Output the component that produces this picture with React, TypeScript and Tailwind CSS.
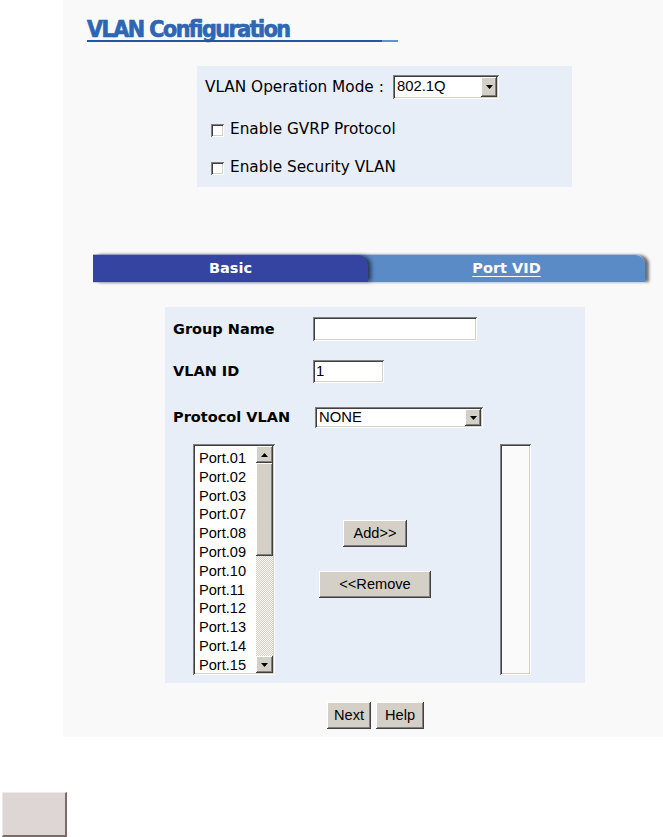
import React from "react";

const SUNKEN =
  "shadow-[inset_1px_1px_0_#808080,inset_-1px_-1px_0_#ffffff,inset_2px_2px_0_#404040,inset_-2px_-2px_0_#d4d0c8]";
const RAISED =
  "shadow-[inset_-1px_-1px_0_#404040,inset_1px_1px_0_#ffffff,inset_-2px_-2px_0_#808080,inset_2px_2px_0_#d4d0c8]";

function TriDown() {
  return (
    <svg width="7" height="4" viewBox="0 0 7 4">
      <path d="M0 0h7L3.5 4z" fill="#000" />
    </svg>
  );
}
function TriUp() {
  return (
    <svg width="7" height="4" viewBox="0 0 7 4">
      <path d="M0 4h7L3.5 0z" fill="#000" />
    </svg>
  );
}

function DropBtn() {
  return (
    <div className={`w-[16px] h-full bg-[#d4d0c8] ${RAISED} flex items-center justify-center`}>
      <TriDown />
    </div>
  );
}

function Checkbox() {
  return <div className={`w-[13px] h-[13px] bg-white ${SUNKEN}`} />;
}

function WinButton({ label, className }: { label: string; className: string }) {
  return (
    <div
      className={`bg-[#d4d0c8] ${RAISED} flex items-center justify-center font-['Liberation_Sans',Arial,sans-serif] text-[14.6px] text-black ${className}`}
    >
      {label}
    </div>
  );
}

const ports = [
  "Port.01",
  "Port.02",
  "Port.03",
  "Port.07",
  "Port.08",
  "Port.09",
  "Port.10",
  "Port.11",
  "Port.12",
  "Port.13",
  "Port.14",
  "Port.15",
];

export default function App() {
  return (
    <div className="w-[663px] h-[837px] bg-white flex flex-col overflow-hidden font-['DejaVu_Sans',Verdana,sans-serif] text-black">
      <div className="flex">
        <div className="w-[63px] shrink-0" />
        <div className="w-[600px] h-[737px] bg-[#f9f9f9] flex flex-col">
          {/* Title */}
          <div className="ml-[24px] mt-[16px] w-[311px] flex flex-col">
            <div className="h-[24px] flex items-end">
              <span className="font-['DejaVu_Sans',sans-serif] font-bold font-stretch-condensed text-[23px] leading-[21px] tracking-[-1.5px] text-[#2d67b4] [-webkit-text-stroke:0.7px_#2d67b4]">
                VLAN Configuration
              </span>
            </div>
            <div className="h-[2px] bg-[linear-gradient(to_right,#1d5aa3_0%,#1d5aa3_95%,#5b93d6_95%,#5b93d6_100%)]" />
          </div>

          {/* Top settings box */}
          <div className="mt-[24px] ml-[134px] w-[375px] h-[121px] bg-[#e7eef7] pt-[8px] px-[8px] flex flex-col">
            <div className="flex items-center h-[25px]">
              <span className="w-[188px] text-[15.3px] leading-none pt-[3px]">VLAN Operation Mode :</span>
              <div className={`flex ${SUNKEN} bg-white p-[2px] w-[106px] h-[24px]`}>
                <span className="flex-1 flex items-center pl-[2px] font-['Liberation_Sans',Arial,sans-serif] text-[14.8px]">
                  802.1Q
                </span>
                <DropBtn />
              </div>
            </div>
            <div className="mt-[21px] h-[20px] pl-[6px] flex items-center">
              <Checkbox />
              <span className="ml-[6px] text-[15.3px] leading-none">Enable GVRP Protocol</span>
            </div>
            <div className="mt-[18px] h-[20px] pl-[6px] flex items-center">
              <Checkbox />
              <span className="ml-[6px] text-[15.3px] leading-none">Enable Security VLAN</span>
            </div>
          </div>

          {/* Tabs */}
          <div className="mt-[67px] ml-[30px] w-[552px] h-[29px] flex bg-[#5a8bc7] rounded-tr-[10px] border-t border-b border-t-[#a9bde3] border-b-[#c6d2ec] shadow-[5px_0_3px_-1px_rgba(0,0,0,0.55)]">
            <div className="w-[275px] h-full bg-[#3444a0] rounded-tr-[10px] shadow-[4px_0_4px_-1px_rgba(0,0,0,0.6)] flex items-center justify-center">
              <span className="text-white font-bold text-[14.5px] leading-none">Basic</span>
            </div>
            <div className="flex-1 flex items-center justify-center">
              <span className="text-white font-bold text-[14.5px] leading-none underline underline-offset-[3px]">
                Port VID
              </span>
            </div>
          </div>

          {/* Main form box */}
          <div className="mt-[24px] ml-[102px] w-[420px] h-[376px] bg-[#e7eef7] pt-[10px] flex flex-col">
            <div className="flex items-center h-[24px]">
              <span className="w-[148px] pl-[8px] font-bold text-[14.5px] leading-none">Group Name</span>
              <div className={`w-[164px] h-[24px] bg-white ${SUNKEN}`} />
            </div>
            <div className="mt-[19px] flex items-center h-[23px]">
              <span className="w-[148px] pl-[8px] font-bold text-[14.5px] leading-none">VLAN ID</span>
              <div
                className={`w-[71px] h-[23px] bg-white ${SUNKEN} flex items-center pl-[3px] font-['Liberation_Sans',Arial,sans-serif] text-[14.8px]`}
              >
                1
              </div>
            </div>
            <div className="mt-[24px] flex items-center h-[21px]">
              <span className="w-[150px] pl-[8px] font-bold text-[14.5px] leading-none">Protocol VLAN</span>
              <div className={`flex ${SUNKEN} bg-white p-[2px] w-[168px] h-[21px]`}>
                <span className="flex-1 flex items-center pl-[2px] font-['Liberation_Sans',Arial,sans-serif] text-[14.8px]">
                  NONE
                </span>
                <DropBtn />
              </div>
            </div>

            <div className="mt-[16px] flex pl-[28px]">
              {/* Left list */}
              <div className={`w-[82px] h-[231px] bg-white ${SUNKEN} p-[2px] flex overflow-hidden`}>
                <div className="flex-1 pt-[3px] pl-[4px] font-['Liberation_Sans',Arial,sans-serif] text-[14.6px] leading-[18.8px] overflow-hidden">
                  {ports.map((p) => (
                    <div key={p}>{p}</div>
                  ))}
                </div>
                <div className="w-[17px] h-full flex flex-col">
                  <div className={`h-[17px] bg-[#d4d0c8] ${RAISED} flex items-center justify-center`}>
                    <TriUp />
                  </div>
                  <div className={`h-[93px] bg-[#d4d0c8] ${RAISED}`} />
                  <div className="flex-1 bg-[repeating-conic-gradient(#d4d0c8_0%_25%,#f7f6f3_0%_50%)] bg-[length:2px_2px]" />
                  <div className={`h-[17px] bg-[#d4d0c8] ${RAISED} flex items-center justify-center`}>
                    <TriDown />
                  </div>
                </div>
              </div>

              {/* Buttons */}
              <div className="w-[200px] flex flex-col items-center">
                <WinButton label="Add>>" className="mt-[76px] w-[64px] h-[27px]" />
                <WinButton label="<<Remove" className="mt-[24px] w-[112px] h-[27px]" />
              </div>

              {/* Right list */}
              <div className={`ml-[25px] w-[31px] h-[231px] bg-[#fafafa] ${SUNKEN}`} />
            </div>
          </div>

          {/* Next / Help */}
          <div className="mt-[19px] ml-[264px] flex gap-[5px]">
            <WinButton label="Next" className="w-[44px] h-[27px]" />
            <WinButton label="Help" className="w-[48px] h-[27px]" />
          </div>
        </div>
      </div>

      {/* Bottom-left box */}
      <div className="mt-[55px] ml-[2px] w-[65px] h-[45px] shrink-0 bg-[#ded6d5] border-t border-l border-r-2 border-b-2 border-t-[#efeaea] border-l-[#efeaea] border-r-[#7a6d69] border-b-[#7a6d69]" />
    </div>
  );
}
